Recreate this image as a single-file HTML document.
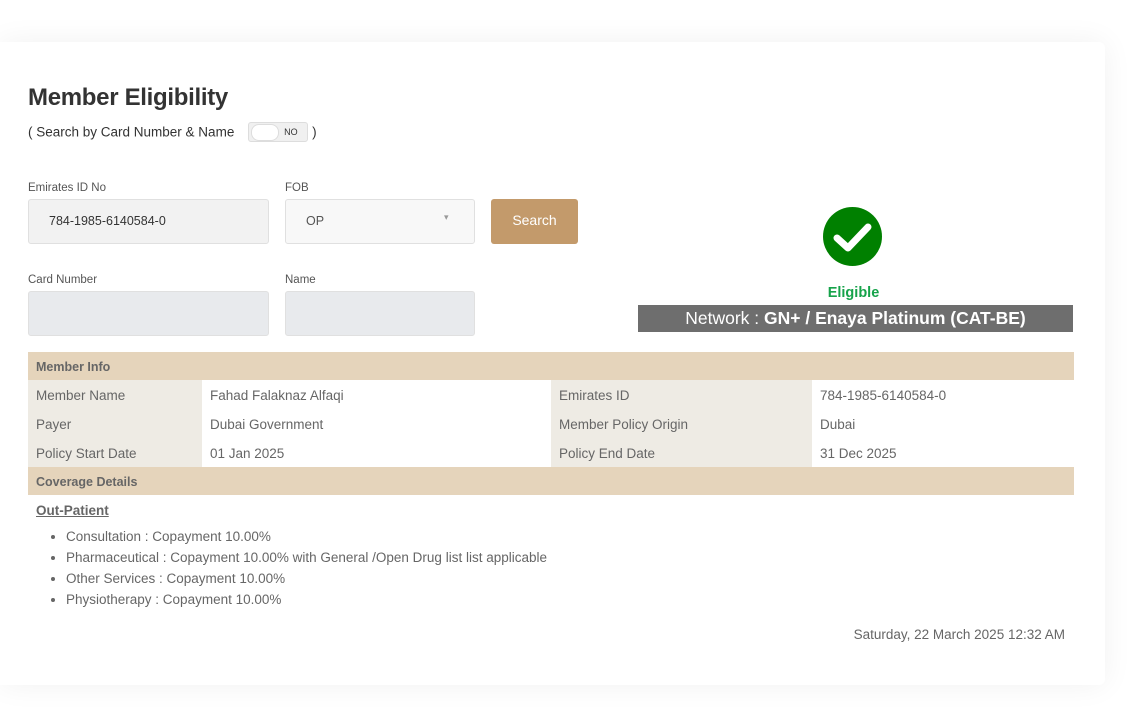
<!DOCTYPE html>
<html><head><style>
body{margin:0;width:1133px;height:708px;background:#fff;font-family:"Liberation Sans",Arial,sans-serif;position:relative;overflow:hidden}
.card{position:absolute;left:0;top:42px;width:1105px;height:643px;background:#fff;border-radius:0 6px 6px 0;box-shadow:0 0 30px rgba(0,0,0,0.06)}
.a{position:absolute}
h1{position:absolute;left:28px;top:84px;margin:0;font-size:24px;font-weight:bold;color:#333;letter-spacing:-0.3px}
.sub{left:28px;top:123px;font-size:13.5px;color:#333}
.tog{display:inline-block;vertical-align:middle;width:58px;height:18px;background:#f0f0f0;border:1px solid #ddd;border-radius:3px;position:relative;margin:0 4px 0 10px;top:-1px}
.tog .k{position:absolute;left:2px;top:1px;width:26px;height:15px;border-radius:8px;background:#fff;border:1px solid #ddd}
.tog .t{position:absolute;left:35px;top:4px;font-size:9px;color:#333}
.lbl{font-size:11.5px;color:#555}
.box{position:absolute;border:1px solid #e0e0e0;border-radius:3px;box-sizing:border-box}
table{position:absolute;left:28px;top:352px;width:1046px;border-collapse:collapse;font-size:13.5px;color:#666}
td{height:29px;padding:2px 0 0 8px;box-sizing:border-box}
.h td{background:#e5d4bb;font-weight:bold;font-size:12.5px;color:#666;height:28px}
.l{background:#eeebe4}
ul{position:absolute;left:28px;top:526px;margin:0;padding-left:38px;font-size:13.5px;color:#666;line-height:21px}
</style></head><body>
<div class="card"></div>
<h1>Member Eligibility</h1>
<div class="a sub">( Search by Card Number &amp; Name <span class="tog"><span class="k"></span><span class="t">NO</span></span>)</div>
<div class="a lbl" style="left:28px;top:182px">Emirates ID No</div>
<div class="box" style="left:28px;top:199px;width:241px;height:45px;background:#f2f2f2"><span class="a" style="left:20px;top:14px;font-size:12.5px;color:#333">784-1985-6140584-0</span></div>
<div class="a lbl" style="left:285px;top:182px">FOB</div>
<div class="box" style="left:285px;top:199px;width:190px;height:45px;background:#f8f8f8"><span class="a" style="left:20px;top:14px;font-size:12.5px;color:#555">OP</span><span class="a" style="left:158px;top:12px;font-size:9px;color:#999">▾</span></div>
<div class="a" style="left:491px;top:199px;width:87px;height:45px;background:#c39a6b;border-radius:3px;color:#fff;font-size:14px;text-align:center;line-height:43px">Search</div>
<div class="a lbl" style="left:28px;top:274px">Card Number</div>
<div class="box" style="left:28px;top:291px;width:241px;height:45px;background:#e8eaed"></div>
<div class="a lbl" style="left:285px;top:274px">Name</div>
<div class="box" style="left:285px;top:291px;width:190px;height:45px;background:#e8eaed"></div>
<svg class="a" style="left:823px;top:207px" width="59" height="59" viewBox="0 0 59 59"><circle cx="29.5" cy="29.5" r="29.5" fill="#008000"/><path d="M14 31 L25 41 L45 20" fill="none" stroke="#fff" stroke-width="7" stroke-linecap="round" stroke-linejoin="round"/></svg>
<div class="a" style="left:636px;top:285px;width:435px;text-align:center;color:#16a34a;font-weight:bold;font-size:14.5px">Eligible</div>
<div class="a" style="left:638px;top:305px;width:435px;height:27px;background:#6e6e6e;color:#fff;text-align:center;font-size:17.5px;line-height:27px">Network : <b>GN+ / Enaya Platinum (CAT-BE)</b></div>
<table>
<tr class="h"><td colspan="4">Member Info</td></tr>
<tr><td class="l" style="width:174px">Member Name</td><td style="width:349px">Fahad Falaknaz Alfaqi</td><td class="l" style="width:261px">Emirates ID</td><td>784-1985-6140584-0</td></tr>
<tr><td class="l">Payer</td><td>Dubai Government</td><td class="l">Member Policy Origin</td><td>Dubai</td></tr>
<tr><td class="l">Policy Start Date</td><td>01 Jan 2025</td><td class="l">Policy End Date</td><td>31 Dec 2025</td></tr>
<tr class="h"><td colspan="4">Coverage Details</td></tr>
</table>
<div class="a" style="left:36px;top:503px;font-size:13.5px;font-weight:bold;color:#666;text-decoration:underline">Out-Patient</div>
<ul>
<li>Consultation : Copayment 10.00%</li>
<li>Pharmaceutical : Copayment 10.00% with General /Open Drug list list applicable</li>
<li>Other Services : Copayment 10.00%</li>
<li>Physiotherapy : Copayment 10.00%</li>
</ul>
<div class="a" style="right:68px;top:627px;font-size:13.5px;color:#666">Saturday, 22 March 2025 12:32 AM</div>
</body></html>
